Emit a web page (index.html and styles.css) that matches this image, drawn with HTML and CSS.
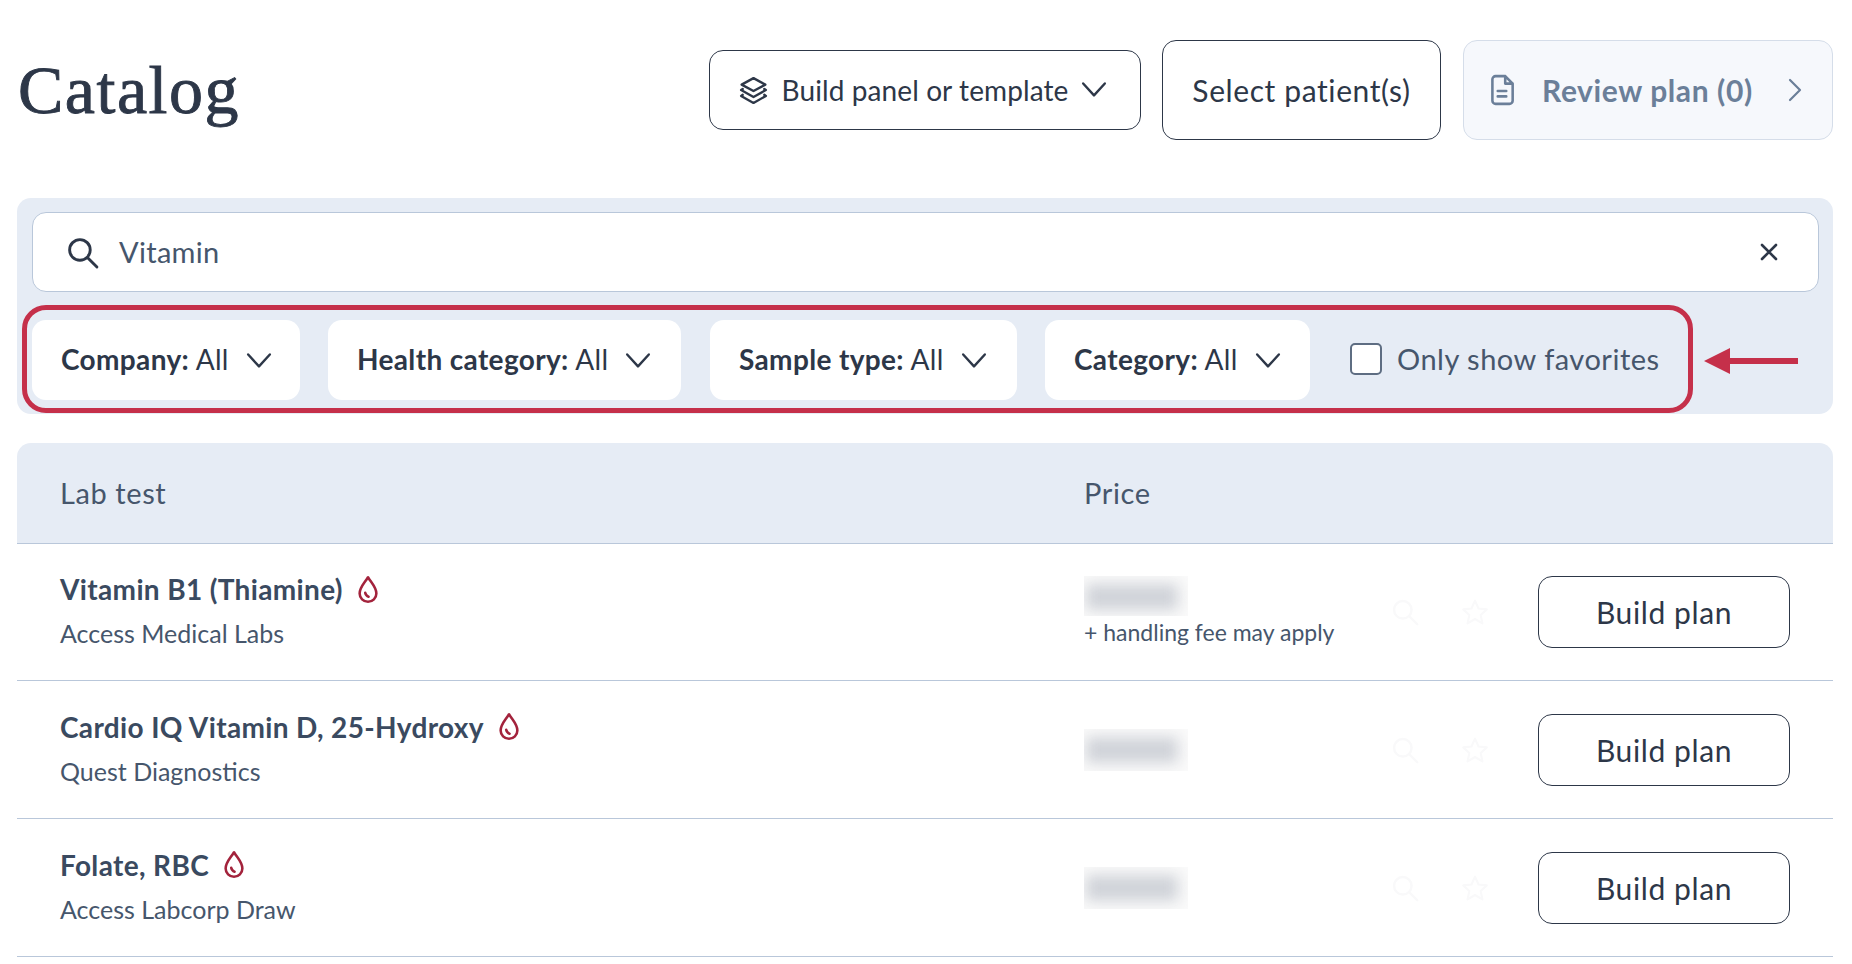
FILE: index.html
```html
<!DOCTYPE html>
<html lang="en">

<head>
    <meta charset="UTF-8">
    <meta name="viewport" content="width=device-width, initial-scale=1.0">
    <title>Catalog</title>
    <link rel="stylesheet" href="styles.css">
</head>

<body>
    <svg width="0" height="0" class="defs">
        <symbol id="chev" viewBox="0 0 24 24"><path d="M2 6l10 11L22 6" fill="none" stroke="currentColor" stroke-width="2.2" stroke-linecap="round" stroke-linejoin="round" /></symbol>
        <symbol id="drop" viewBox="0 0 20 26"><path d="M10 2C7 7 2.500 11 2.500 16.500a7.500 7.500 0 0 0 15 0C17.500 11 13 7 10 2z" fill="none" stroke="currentColor" stroke-width="2.300" stroke-linejoin="round" /><path d="M7.500 16c.4 2 1.500 3 3 3.400" fill="none" stroke="currentColor" stroke-width="2.300" stroke-linecap="round" /></symbol>
        <symbol id="lens" viewBox="0 0 32 32"><circle cx="13.500" cy="13.500" r="10" fill="none" stroke="currentColor" stroke-width="2.800" /><path d="M21 21l9 9" fill="none" stroke="currentColor" stroke-width="2.800" stroke-linecap="round" /></symbol>
        <symbol id="star" viewBox="0 0 32 32"><path d="M16 3l4 9 9.500 1-7 6.500 2 9.500-8.500-5-8.500 5 2-9.500-7-6.500 9.500-1z" fill="none" stroke="currentColor" stroke-width="2.400" stroke-linejoin="round" /></symbol>
    </svg>

    <header class="top">
        <h1>Catalog</h1>
        <div class="actions">
            <button class="btn btn-build">
                <svg class="ico-layers" viewBox="0 0 28 26"><path d="M14 2l11 6-11 6-11-6z M4 12l-1.500 1L14 19.500 25.500 13 24 12 M4 17.500l-1.500 1L14 25l11.500-6.500-1.500-1" fill="none" stroke="currentColor" stroke-width="2.200" stroke-linejoin="round" stroke-linecap="round" /></svg>
                Build panel or template
                <svg class="chev"><use href="#chev" /></svg>
            </button>
            <button class="btn btn-select">Select patient(s)</button>
            <button class="btn btn-review">
                <svg class="ico-doc" viewBox="0 0 24 30"><path d="M3 5a3 3 0 0 1 3-3h9l7 7v16a3 3 0 0 1-3 3H6a3 3 0 0 1-3-3z M15 2v7h7 M8 16h8 M8 21h8" fill="none" stroke="currentColor" stroke-width="2.400" stroke-linejoin="round" stroke-linecap="round" /></svg>
                <span class="review-label">Review plan (0)</span>
                <svg class="ico-next" viewBox="0 0 14 24"><path d="M2 2l10 10L2 22" fill="none" stroke="currentColor" stroke-width="2.200" stroke-linecap="round" stroke-linejoin="round" /></svg>
            </button>
        </div>
    </header>

    <section class="filters">
        <div class="search">
            <svg class="ico-lens"><use href="#lens" /></svg>
            <span class="search-text">Vitamin</span>
            <svg class="ico-close" viewBox="0 0 20 20"><path d="M3 3l14 14M17 3L3 17" fill="none" stroke="currentColor" stroke-width="2.600" stroke-linecap="round" /></svg>
        </div>
        <div class="filter-row-wrap">
            <div class="filter-row">
                <div class="chip chip-company"><b>Company:</b>&nbsp;All <svg class="chev"><use href="#chev" /></svg></div>
                <div class="chip chip-health"><b>Health category:</b>&nbsp;All <svg class="chev"><use href="#chev" /></svg></div>
                <div class="chip chip-sample"><b>Sample type:</b>&nbsp;All <svg class="chev"><use href="#chev" /></svg></div>
                <div class="chip chip-category"><b>Category:</b>&nbsp;All <svg class="chev"><use href="#chev" /></svg></div>
                <label class="fav"><span class="box"></span>Only show favorites</label>
            </div>
            <svg class="arrow" viewBox="0 0 94 26"><path d="M0 13L26 0v10h68v6H26v10z" fill="#c5304a" /></svg>
        </div>
    </section>

    <section class="table">
        <div class="thead">
            <div class="col-name">Lab test</div>
            <div class="col-price">Price</div>
        </div>

        <div class="row">
            <div class="col-name">
                <div class="test-name">Vitamin B1 (Thiamine) <svg class="ico-drop"><use href="#drop" /></svg></div>
                <div class="test-lab">Access Medical Labs</div>
            </div>
            <div class="col-price">
                <div class="price-blur price-small"><i></i></div>
                <div class="fee">+ handling fee may apply</div>
            </div>
            <div class="row-tools">
                <svg class="ico-faint"><use href="#lens" /></svg>
                <svg class="ico-faint"><use href="#star" /></svg>
            </div>
            <button class="btn btn-plan">Build plan</button>
        </div>

        <div class="row">
            <div class="col-name">
                <div class="test-name">Cardio IQ Vitamin D, 25-Hydroxy <svg class="ico-drop"><use href="#drop" /></svg></div>
                <div class="test-lab">Quest Diagnostics</div>
            </div>
            <div class="col-price">
                <div class="price-blur"><i></i></div>
            </div>
            <div class="row-tools">
                <svg class="ico-faint"><use href="#lens" /></svg>
                <svg class="ico-faint"><use href="#star" /></svg>
            </div>
            <button class="btn btn-plan">Build plan</button>
        </div>

        <div class="row">
            <div class="col-name">
                <div class="test-name">Folate, RBC <svg class="ico-drop"><use href="#drop" /></svg></div>
                <div class="test-lab">Access Labcorp Draw</div>
            </div>
            <div class="col-price">
                <div class="price-blur"><i></i></div>
            </div>
            <div class="row-tools">
                <svg class="ico-faint"><use href="#lens" /></svg>
                <svg class="ico-faint"><use href="#star" /></svg>
            </div>
            <button class="btn btn-plan">Build plan</button>
        </div>
    </section>
</body>

</html>
```

FILE: styles.css
```css
body {
    font-family: 'Lato', 'Noto Sans', sans-serif;
    margin: 0;
    padding: 40px 19px 0 17px;
    background-color: white;
    color: #2d3748;
    font-size: 28px;
}

.defs {
    position: absolute;
}

.top {
    display: flex;
    justify-content: space-between;
    align-items: center;
    height: 100px;
}

.top h1 {
    margin: 0;
    font-family: 'Liberation Serif', serif;
    font-size: 68px;
    font-weight: 400;
    letter-spacing: 1.5px;
    padding-left: 1px;
    -webkit-text-stroke: 0.9px #2d3748;
}

.actions {
    display: flex;
    align-items: center;
    gap: 21px;
}

.btn {
    font-family: inherit;
    font-size: 30px;
    letter-spacing: 0.6px;
    color: #2d3748;
    background: white;
    border: 1.5px solid #2d3748;
    border-radius: 14px;
    display: flex;
    align-items: center;
    justify-content: center;
    box-sizing: border-box;
    padding: 0;
}

.btn-build {
    width: 432px;
    height: 80px;
    gap: 13px;
    font-size: 28px;
    letter-spacing: 0.1px;
    padding-right: 5px;
}

.btn-select {
    width: 279px;
    height: 100px;
    margin-right: 1px;
}

.btn-review {
    width: 370px;
    height: 100px;
    background: #f6f8fc;
    border-color: #d5dde9;
    color: #6b7f99;
    font-weight: 700;
    justify-content: flex-start;
    padding-left: 25px;
}

.ico-layers {
    width: 31px;
    height: 28px;
}

.ico-doc {
    width: 26px;
    height: 32px;
}

.review-label {
    margin-left: 27px;
    flex: 1;
    text-align: left;
    white-space: nowrap;
}

.ico-next {
    width: 14px;
    height: 24px;
    margin-right: 30px;
}

.chev {
    width: 26px;
    height: 26px;
}

.filters {
    margin-top: 58px;
    height: 216px;
    box-sizing: border-box;
    background-color: #e6ecf5;
    border-radius: 14px;
    padding: 14px 14px 0 15px;
}

.search {
    display: flex;
    align-items: center;
    height: 80px;
    box-sizing: border-box;
    background: white;
    border: 1.5px solid #b9c7da;
    border-radius: 14px;
    padding: 0 39px 0 33px;
    color: #46566c;
    font-size: 29px;
    letter-spacing: 0.3px;
}

.ico-lens {
    width: 33px;
    height: 33px;
    color: #2d3748;
}

.search-text {
    margin-left: 20px;
    margin-bottom: 2px;
    flex: 1;
}

.ico-close {
    width: 20px;
    height: 20px;
    color: #2d3748;
}

.filter-row-wrap {
    display: flex;
    align-items: center;
    margin: 13px 0 0 -10px;
}

.filter-row {
    display: flex;
    align-items: center;
    width: 1671px;
    height: 108px;
    box-sizing: border-box;
    border: 5px solid #c5304a;
    border-radius: 24px;
    padding: 2px 0 0 5px;
}

.chip {
    display: flex;
    align-items: center;
    height: 80px;
    box-sizing: border-box;
    background: white;
    border-radius: 14px;
    padding: 0 0 2px 29px;
    white-space: nowrap;
    letter-spacing: 0.35px;
}

.chip .chev {
    margin-left: 17px;
    margin-top: 3px;
}

.chip-company {
    width: 268px;
    margin-right: 28px;
}

.chip-health {
    width: 353px;
    margin-right: 29px;
}

.chip-sample {
    width: 307px;
    margin-right: 28px;
}

.chip-category {
    width: 265px;
}

.fav {
    display: flex;
    align-items: center;
    margin-left: 40px;
    padding-bottom: 3px;
    color: #46566c;
    white-space: nowrap;
    font-size: 29px;
    letter-spacing: 0.5px;
}

.box {
    width: 32px;
    height: 32px;
    box-sizing: border-box;
    background: white;
    border: 2px solid #5e6d82;
    border-radius: 5px;
    margin-right: 15px;
}

.arrow {
    width: 94px;
    height: 26px;
    margin: 4px 0 0 11px;
}

.table {
    margin-top: 29px;
}

.thead {
    display: flex;
    align-items: center;
    height: 101px;
    box-sizing: border-box;
    background-color: #e6ecf5;
    border-bottom: 1.5px solid #b9c7da;
    border-radius: 14px 14px 0 0;
    color: #46566c;
    font-size: 29px;
    letter-spacing: 0.6px;
    padding-bottom: 2px;
}

.col-name {
    width: 1024px;
    padding-left: 43px;
    flex-shrink: 0;
}

.col-price {
    width: 290px;
}

.row {
    display: flex;
    align-items: center;
    height: 138px;
    box-sizing: border-box;
    border-bottom: 1.5px solid #b9c7da;
}

.thead + .row {
    height: 137px;
}

.test-name {
    display: flex;
    align-items: center;
    gap: 13px;
    font-weight: 700;
    color: #3a4a60;
    letter-spacing: 0.35px;
    margin-top: -4px;
}

.ico-drop {
    width: 24px;
    height: 29px;
    color: #a3233c;
}

.test-lab {
    margin-top: 12px;
    font-size: 25px;
    color: #46566c;
}

.price-blur {
    width: 104px;
    height: 42px;
    background: #fafafa;
    overflow: hidden;
}

.price-small {
    height: 40px;
    margin-top: -2px;
}

.price-blur i {
    display: block;
    width: 92px;
    height: 26px;
    margin: 8px 0 0 2px;
    background: #d0d3d9;
    filter: blur(7px);
}

.fee {
    font-size: 23px;
    color: #46566c;
    margin-top: 2px;
    white-space: nowrap;
}

.row-tools {
    display: flex;
    gap: 42px;
    width: 164px;
    padding-left: 17px;
    box-sizing: border-box;
}

.ico-faint {
    width: 28px;
    height: 28px;
    color: #f9f9fa;
}

.btn-plan {
    width: 252px;
    height: 72px;
}
```
